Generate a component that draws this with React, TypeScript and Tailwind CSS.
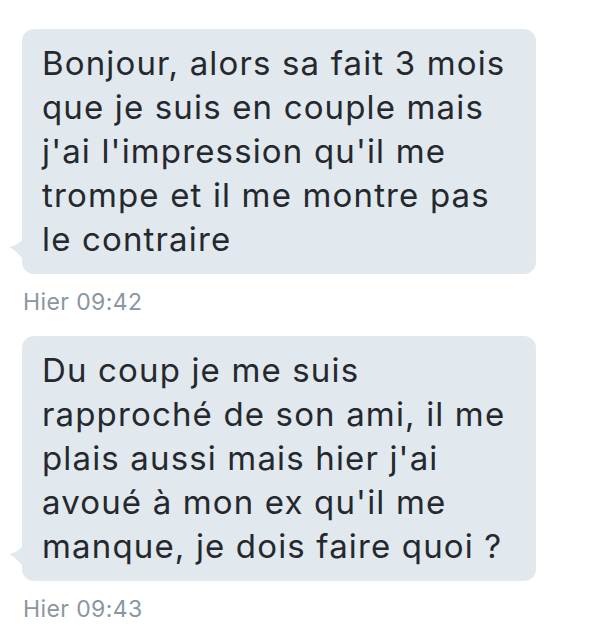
import React from 'react';

const messages = [
  {
    lines: [
      'Bonjour, alors sa fait 3 mois',
      'que je suis en couple mais',
      "j'ai l'impression qu'il me",
      'trompe et il me montre pas',
      'le contraire',
    ],
    time: 'Hier 09:42',
  },
  {
    lines: [
      'Du coup je me suis',
      'rapproché de son ami, il me',
      "plais aussi mais hier j'ai",
      "avoué à mon ex qu'il me",
      'manque, je dois faire quoi ?',
    ],
    time: 'Hier 09:43',
  },
];

function Tail() {
  return (
    <svg
      className="absolute left-[-14px] bottom-[14px]"
      width="16"
      height="24"
      viewBox="0 0 16 24"
    >
      <path d="M16 0 C14 5 10 9 1 11 C6 13 10 18 16 24 Z" fill="#e1e8ee" />
    </svg>
  );
}

export default function App() {
  return (
    <div
      className="w-[592px] h-[634px] bg-white pt-[29px] pl-[22px]"
      style={{ fontFamily: 'Inter, "Noto Sans", sans-serif' }}
    >
      {messages.map((m, i) => (
        <div key={i} className="mb-[19px]">
          <div className="relative w-[514px] bg-[#e1e8ee] rounded-[12px] px-[20px] pt-[12px] pb-[13px] text-[#25292e] text-[33px] leading-[44px] tracking-[1.15px]">
            {m.lines.map((l, j) => (
              <div key={j} className="whitespace-nowrap">{l}</div>
            ))}
            <Tail />
          </div>
          <div className="mt-[13px] ml-[1px] text-[#8a96a0] text-[23px] leading-[30px] tracking-[0.4px]">{m.time}</div>
        </div>
      ))}
    </div>
  );
}
